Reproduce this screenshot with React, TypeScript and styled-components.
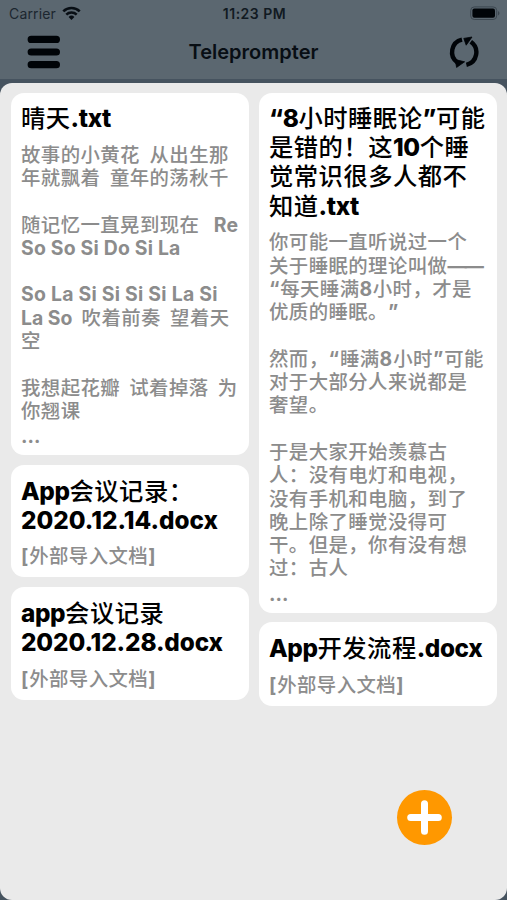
import React from "react";
import styled, { createGlobalStyle } from "styled-components";

const GlobalStyle = createGlobalStyle`
  * { box-sizing: border-box; }
  html, body { margin: 0; padding: 0; background: #46535f; }
`;

const latin = `Inter, "Noto Sans CJK SC", sans-serif`;
const han = `"Noto Sans CJK SC", Inter, sans-serif`;

const Screen = styled.div`
  width: 507px;
  height: 900px;
  display: flex;
  flex-direction: column;
  overflow: hidden;
  background: #46535f;
  font-family: ${latin};
`;

const TopArea = styled.header`
  height: 79px;
  flex: none;
  background: #5b6770;
`;

const StatusBar = styled.div`
  height: 27px;
  padding: 0 7px 0 9px;
  display: grid;
  grid-template-columns: 1fr auto 1fr;
  align-items: center;
  font-size: 14px;
  line-height: 27px;
  color: #111a22;
`;

const Carrier = styled.div`
  display: flex;
  align-items: center;
  gap: 6px;
  letter-spacing: 0.15px;
  color: #1c262f;
`;

const Clock = styled.div`
  font-weight: 600;
  letter-spacing: 0.5px;
`;

const Battery = styled.div`
  display: flex;
  justify-content: flex-end;
`;

const NavBar = styled.div`
  height: 50px;
  padding: 0 27px;
  display: grid;
  grid-template-columns: 1fr auto 1fr;
  align-items: center;
`;

const NavTitle = styled.h1`
  margin: 0;
  font-size: 20px;
  line-height: 50px;
  font-weight: 600;
  letter-spacing: 0;
  color: #080e14;
`;

const IconButton = styled.button<{ $end?: boolean }>`
  border: 0;
  padding: 0;
  background: none;
  display: flex;
  justify-self: ${(p) => (p.$end ? "end" : "start")};
`;

const Sheet = styled.main`
  flex: 1;
  margin-top: 3.5px;
  padding: 10px 10px 0 11px;
  display: grid;
  grid-template-columns: 238px 238px;
  gap: 10px;
  align-items: start;
  background: #eaeaea;
  border-radius: 12px;
`;

const Column = styled.div`
  display: flex;
  flex-direction: column;
  gap: 9.7px;
`;

const Card = styled.article`
  padding: 11.6px 10px 8.8px;
  background: #fff;
  border-radius: 13px;
`;

const Title = styled.h2`
  margin: 0 0 10.4px;
  font-size: 24.3px;
  line-height: 29.2px;
  font-weight: 800;
  color: #000;
`;

const Body = styled.div`
  font-size: 19.4px;
  line-height: 23.3px;
  font-weight: 700;
  color: #8c8c8c;
`;

const Line = styled.div<{ $body?: boolean; $drop?: boolean }>`
  height: ${(p) => (p.$body ? 23.3 : 29.2)}px;
  padding-top: ${(p) => (p.$drop ? 2 : 0)}px;
  white-space: pre;
  text-spacing-trim: space-all;
`;

const Han = styled.span<{ $body?: boolean }>`
  font-family: ${han};
  font-weight: 500;
  line-height: 0;
  letter-spacing: ${(p) => (p.$body ? 0.43 : 0.5)}px;
`;

const Latin = styled.span<{ $track: number }>`
  letter-spacing: ${(p) => p.$track}px;
`;

const AddButton = styled.button`
  position: absolute;
  left: 397px;
  top: 790px;
  width: 55px;
  height: 55px;
  padding: 0;
  border: 0;
  border-radius: 50%;
  background: #ff9800;
  display: flex;
  align-items: center;
  justify-content: center;
`;

type TextLine = string | [text: string, tracking: number];

const HAN_RUN = /([\u3001-\u9fff\uff00-\uffef]+)/;

function TextLines({ lines, body }: { lines: TextLine[]; body?: boolean }) {
  return (
    <>
      {lines.map((line, i) => {
        const [text, track] = typeof line === "string" ? [line, body ? 0.2 : -0.4] : line;
        return (
          <Line key={i} $body={body} $drop={text === "…"}>
            {text.split(HAN_RUN).filter(Boolean).map((run, j) =>
              HAN_RUN.test(run) ? (
                <Han key={j} $body={body}>{run}</Han>
              ) : (
                <Latin key={j} $track={track}>{run}</Latin>
              )
            )}
          </Line>
        );
      })}
    </>
  );
}

type Doc = { title: TextLine[]; body: TextLine[] };

const external: TextLine[] = [["[外部导入文档]", 0.9]];

const leftDocs: Doc[] = [
  {
    title: ["晴天.txt"],
    body: [
      "故事的小黄花  从出生那",
      "年就飘着  童年的荡秋千",
      "",
      "随记忆一直晃到现在   Re",
      "So So Si Do Si La",
      "",
      ["So La Si Si Si Si La Si", 0.25],
      ["La So  吹着前奏  望着天", 0],
      "空",
      "",
      ["我想起花瓣  试着掉落  为", 0],
      "你翘课",
      "…",
    ],
  },
  { title: ["App会议记录：", ["2020.12.14.docx", 0]], body: external },
  { title: ["app会议记录", ["2020.12.28.docx", -0.12]], body: external },
];

const rightDocs: Doc[] = [
  {
    title: ["“8小时睡眠论”可能", "是错的！这10个睡", "觉常识很多人都不", "知道.txt"],
    body: [
      "你可能一直听说过一个",
      ["关于睡眠的理论叫做——", -2.2],
      ["“每天睡满8小时，才是", 0.7],
      "优质的睡眠。”",
      "",
      ["然而，“睡满8小时”可能", 1],
      "对于大部分人来说都是",
      "奢望。",
      "",
      "于是大家开始羡慕古",
      "人：没有电灯和电视，",
      "没有手机和电脑，到了",
      "晚上除了睡觉没得可",
      "干。但是，你有没有想",
      "过：古人",
      "…",
    ],
  },
  { title: ["App开发流程.docx"], body: external },
];

function DocCard({ doc }: { doc: Doc }) {
  return (
    <Card>
      <Title><TextLines lines={doc.title} /></Title>
      <Body><TextLines lines={doc.body} body /></Body>
    </Card>
  );
}

export default function App() {
  return (
    <Screen>
      <GlobalStyle />
      <TopArea>
        <StatusBar>
          <Carrier>
            <span>Carrier</span>
            <svg width="19" height="15" viewBox="0 0 19 15" fill="none" stroke="#080e14">
              <path d="M1.3 5.4a11.6 11.6 0 0 1 16.4 0" strokeWidth="2.6" />
              <path d="M4.3 8.6a7.4 7.4 0 0 1 10.4 0" strokeWidth="2.5" />
              <path d="M9.5 14 6.6 11a4.1 4.1 0 0 1 5.8 0z" fill="#080e14" stroke="none" />
            </svg>
          </Carrier>
          <Clock>11:23 PM</Clock>
          <Battery>
            <svg width="30" height="15" viewBox="0 0 30 15">
              <rect x="0.7" y="0.9" width="26" height="12.6" rx="3.6" fill="none" stroke="#3c4750" />
              <rect x="2.4" y="2.6" width="22.6" height="9.2" rx="2" fill="#000408" />
              <path d="M28 5v4.4c2-.8 2-3.6 0-4.4z" fill="#3c4750" />
            </svg>
          </Battery>
        </StatusBar>
        <NavBar>
          <IconButton aria-label="Menu">
            <svg width="34" height="34" viewBox="0 0 34 34" stroke="#000408" strokeWidth="7.2" strokeLinecap="round">
              <path d="M4.2 4.4h25.2M4.2 17h25.2M4.2 29.7h25.2" />
            </svg>
          </IconButton>
          <NavTitle>Teleprompter</NavTitle>
          <IconButton $end aria-label="Refresh">
            <svg width="32" height="34" viewBox="0 0 32 34" stroke="#000408">
              <path d="M14 4.6A12.8 12.8 0 0 0 9.6 27.6" fill="none" strokeWidth="4.4" />
              <path d="M18.4 29.8A12.8 12.8 0 0 0 22.8 6.8" fill="none" strokeWidth="4.4" />
              <path d="M16.6 26.8 8.6 32.4 7.2 24.6z" fill="#000408" strokeWidth="0.8" />
              <path d="M15.8 3.4 24 2 18.2 10.2z" fill="#000408" strokeWidth="0.8" />
            </svg>
          </IconButton>
        </NavBar>
      </TopArea>
      <Sheet>
        <Column>{leftDocs.map((doc, i) => <DocCard key={i} doc={doc} />)}</Column>
        <Column>{rightDocs.map((doc, i) => <DocCard key={i} doc={doc} />)}</Column>
      </Sheet>
      <AddButton aria-label="Add">
        <svg width="35" height="35" viewBox="0 0 35 35" stroke="#fff" strokeWidth="7" strokeLinecap="round">
          <path d="M17.5 3.7v27.6M3.7 17.5h27.6" />
        </svg>
      </AddButton>
    </Screen>
  );
}
